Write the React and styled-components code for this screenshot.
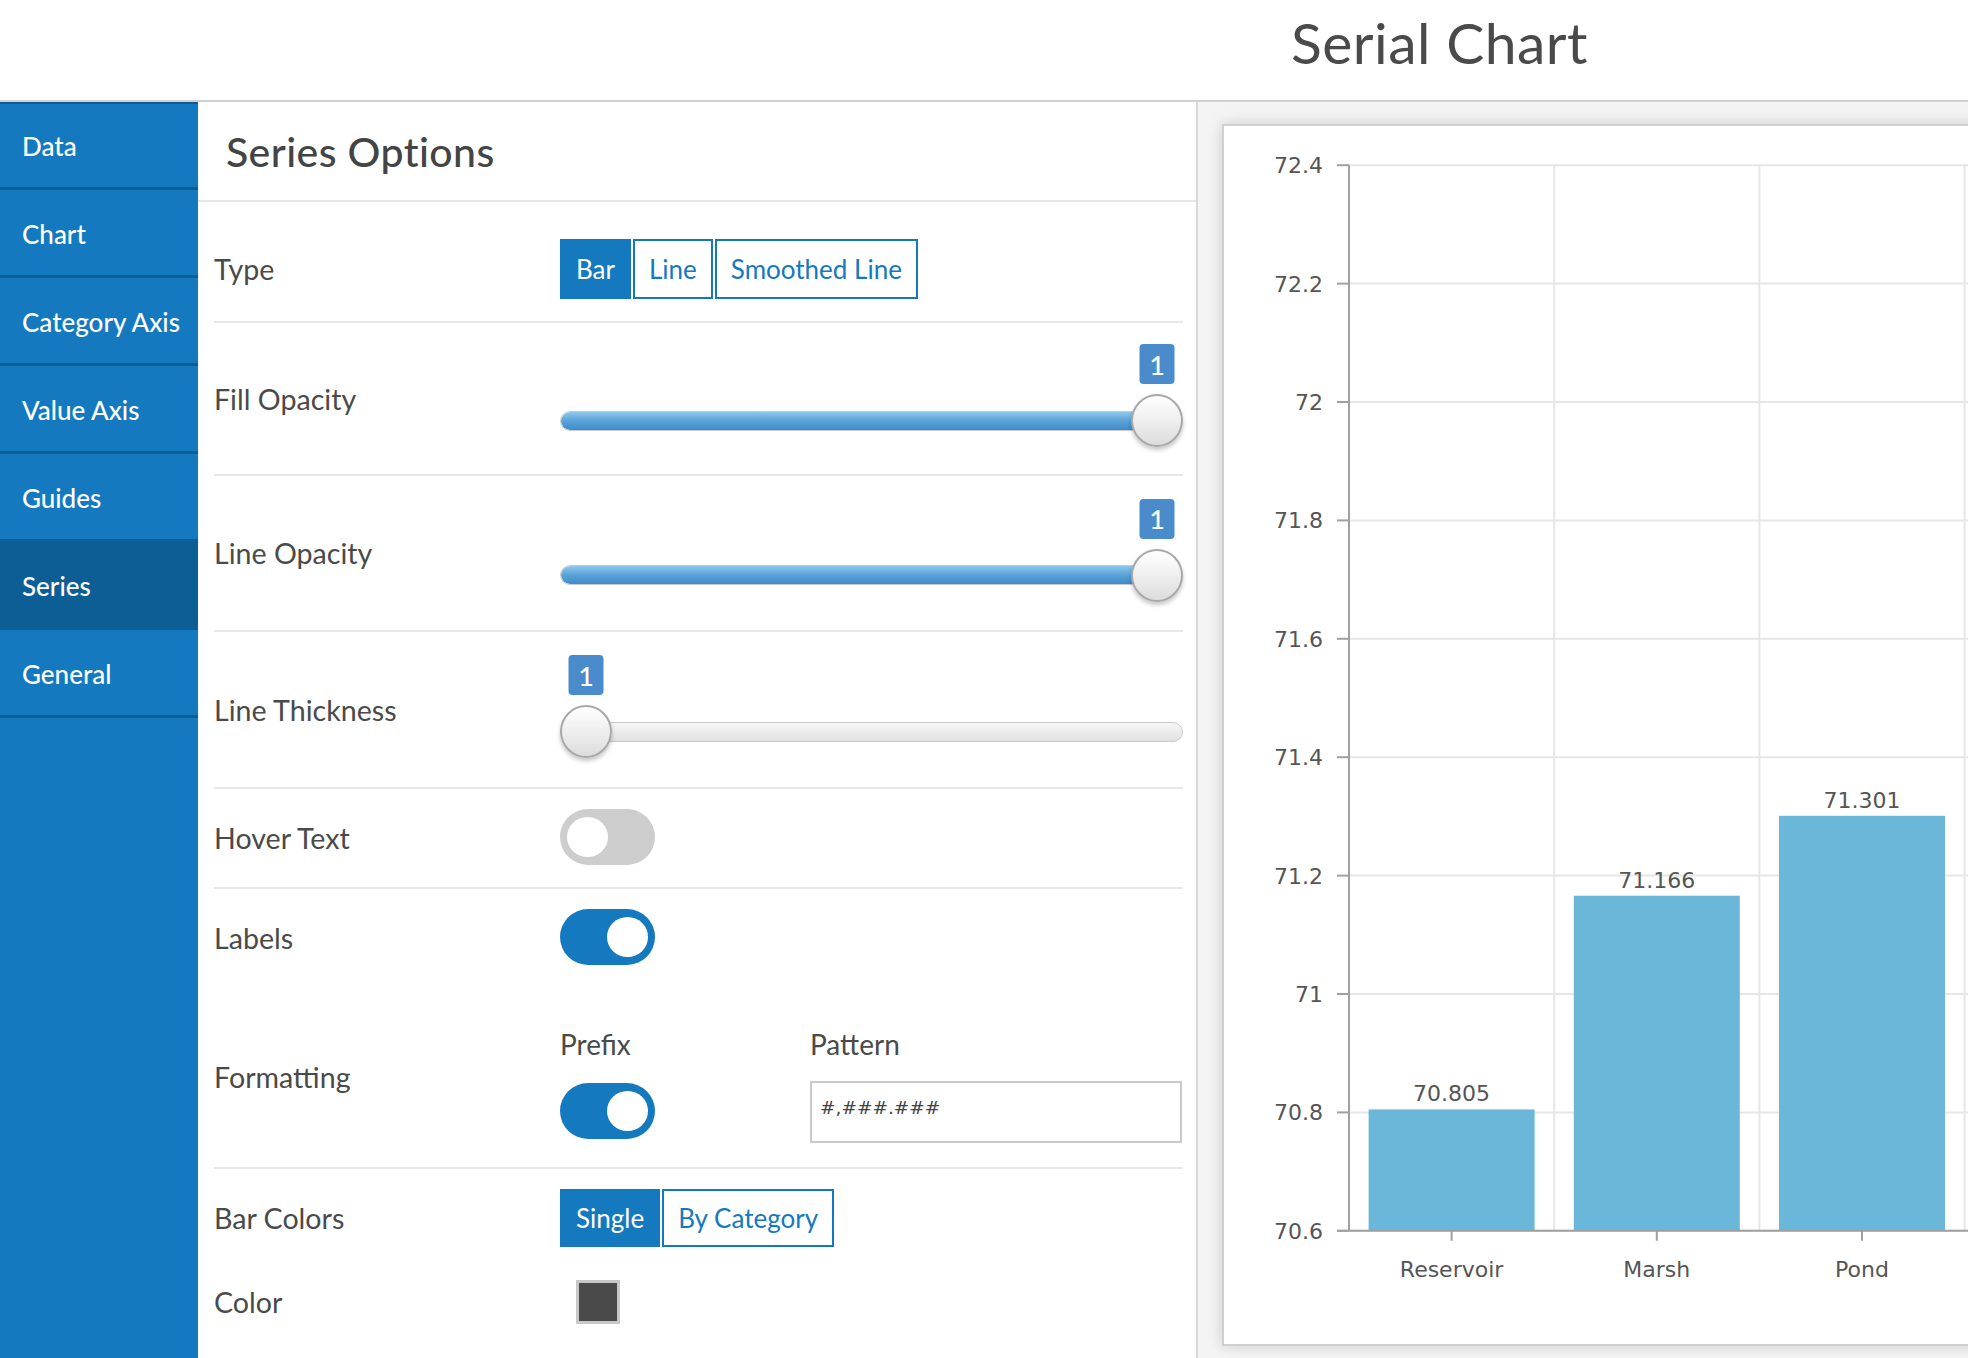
import React from "react";
import styled, { createGlobalStyle } from "styled-components";

const GlobalStyle = createGlobalStyle`
  html, body { margin: 0; padding: 0; background: #fff; }
  body { font-family: Lato, "Open Sans", sans-serif; color: #4a4a4a; }
  * { box-sizing: border-box; }
`;

const BLUE = "#1479bf";

const Page = styled.div`
  width: 1968px;
  height: 1358px;
  overflow: hidden;
  display: flex;
  flex-direction: column;
`;

const Header = styled.header`
  flex: none;
  height: 102px;
  border-bottom: 2px solid #d2d2d2;
  padding: 8px 0 0 1291px;
`;

const Title = styled.h1`
  margin: 0;
  font-size: 57px;
  font-weight: 400;
  line-height: 1.2;
  letter-spacing: 0.5px;
  color: #4a4a4a;
`;

const Body = styled.div`
  flex: 1;
  display: flex;
  min-height: 0;
`;

const Sidebar = styled.nav`
  flex: none;
  width: 198px;
  background: ${BLUE};
  box-shadow: inset 0 2px 0 #0d5e96;
`;

const NavItem = styled.div`
  height: 88px;
  display: flex;
  align-items: center;
  padding: 2px 0 0 22px;
  color: #fff;
  font-size: 26px;
  font-weight: 500;
  background: ${(p) => (p.$active ? "#0e5e96" : "transparent")};
  border-bottom: 3px solid #0e5f98;
`;

const Panel = styled.main`
  flex: none;
  width: 1000px;
  border-right: 2px solid #d8d8d8;
  background: #fff;
`;

const PanelHead = styled.div`
  height: 100px;
  display: flex;
  align-items: center;
  padding-left: 28px;
  border-bottom: 2px solid #e6e6e6;
  h2 {
    margin: 0;
    font-size: 41px;
    font-weight: 500;
    letter-spacing: 0.4px;
    color: #444;
  }
`;

const Rows = styled.div`
  padding: 0 13px 0 16px;
`;

const Row = styled.div`
  height: ${(p) => p.$h}px;
  display: grid;
  grid-template-columns: 346px 1fr;
  align-items: center;
  padding-top: ${(p) => p.$pt || 0}px;
  border-bottom: ${(p) => (p.$line ? "2px solid #e8e8e8" : "none")};
`;

const Label = styled.div`
  font-size: 28.6px;
  color: #4a4a4a;
`;

const Segmented = styled.div`
  display: flex;
  gap: 2px;
`;

const SegButton = styled.button`
  height: ${(p) => p.$h || 60}px;
  padding: 0 14px;
  border: 2px solid ${BLUE};
  background: ${(p) => (p.$active ? BLUE : "#fff")};
  color: ${(p) => (p.$active ? "#fff" : BLUE)};
  font-family: Lato, sans-serif;
  font-size: 26px;
  cursor: pointer;
`;

const SliderWrap = styled.div`
  position: relative;
  padding-top: 50px;
  padding-bottom: 6px;
`;

const Badge = styled.span`
  position: absolute;
  top: 0;
  width: 35px;
  height: 40px;
  transform: translateX(-50%);
  background: #4a8bcb;
  border-radius: 4px;
  color: #fff;
  font-size: 27px;
  font-weight: 500;
  display: flex;
  align-items: center;
  justify-content: center;
`;

const TrackArea = styled.div`
  position: relative;
  height: 53px;
  display: flex;
  align-items: center;
`;

const Track = styled.div`
  width: 100%;
  height: 20px;
  border-radius: 10px;
  background: linear-gradient(#f6f6f6, #e1e1e1);
  border: 1px solid #cbcbcb;
  overflow: hidden;
`;

const Fill = styled.div`
  height: 100%;
  background: linear-gradient(#8cc8ec, #5aa2d8 50%, #3f8bca);
  border-radius: 10px;
`;

const Knob = styled.span`
  position: absolute;
  top: 0;
  width: 52px;
  height: 53px;
  border-radius: 50%;
  background: linear-gradient(#ffffff, #f2f2f2 40%, #dcdcdc);
  border: 2px solid #a8a8a8;
  box-shadow: 0 3px 4px rgba(0, 0, 0, 0.22);
`;

const Toggle = styled.span`
  position: relative;
  display: inline-block;
  width: 95px;
  height: 56px;
  border-radius: 28px;
  background: ${(p) => (p.$on ? BLUE : "#cdcdcd")};
  &::after {
    content: "";
    position: absolute;
    top: 8px;
    left: ${(p) => (p.$on ? "47px" : "7px")};
    width: 41px;
    height: 40px;
    border-radius: 50%;
    background: #fff;
  }
`;

const FieldGrid = styled.div`
  display: grid;
  grid-template-columns: 250px 372px;
  grid-template-rows: 32px 62px;
  row-gap: 21px;
  align-items: center;
  margin-top: 17px;
`;

const SubLabel = styled.div`
  font-size: 28px;
  line-height: 32px;
  color: #4a4a4a;
`;

const PatternInput = styled.input`
  width: 372px;
  height: 62px;
  border: 2px solid #cacaca;
  padding: 0 8px 10px;
  font-family: "DejaVu Sans", Verdana, sans-serif;
  font-size: 18.5px;
  color: #444;
  outline: none;
`;

const Swatch = styled.span`
  display: block;
  width: 44px;
  height: 44px;
  margin-left: 16px;
  border: 3px solid #c8c8c8;
  background: #4a4a4a;
`;

const ChartArea = styled.section`
  flex: 1;
  min-width: 0;
  background: #f4f4f4;
  padding: 22px 0 0 24px;
  overflow: hidden;
`;

const ChartCard = styled.div`
  width: 820px;
  height: 1222px;
  background: #fff;
  border: 2px solid #d0d0d0;
  box-shadow: 0 0 14px rgba(0, 0, 0, 0.16);
`;

const Slider = ({ value, min, max }) => {
  const pct = (value - min) / (max - min);
  const center = `calc(${pct} * (100% - 52px) + 26px)`;
  return (
    <SliderWrap>
      <Badge style={{ left: center }}>{value}</Badge>
      <TrackArea>
        <Track>{pct > 0 && <Fill style={{ width: center }} />}</Track>
        <Knob style={{ left: `calc(${pct} * (100% - 52px))` }} />
      </TrackArea>
    </SliderWrap>
  );
};

// chart geometry (card inner coordinates)
const AX = 125;
const Y0 = 1104.8;
const STEP = 118.4;
const COL = 205.2;
const W = 816;
const yOf = (v) => Y0 - ((v - 70.6) / 0.2) * STEP;
const ticks = ["72.4", "72.2", "72", "71.8", "71.6", "71.4", "71.2", "71", "70.8", "70.6"];
const data = [
  { name: "Reservoir", value: 70.805 },
  { name: "Marsh", value: 71.166 },
  { name: "Pond", value: 71.301 },
];

const BarChart = () => {
  const top = yOf(72.4);
  return (
    <svg width={W} height={1218} style={{ display: "block" }}>
      <g fontFamily="'DejaVu Sans', Verdana, sans-serif" fontSize="22" fill="#555">
        {ticks.map((t) => {
          const y = yOf(parseFloat(t));
          return (
            <g key={t}>
              <line x1={AX} x2={W} y1={y} y2={y} stroke="#e6e6e6" strokeWidth="2" />
              <line x1={AX - 12} x2={AX} y1={y} y2={y} stroke="#a0a0a0" strokeWidth="2" />
              <text x={AX - 26} y={y + 8} textAnchor="end">{t}</text>
            </g>
          );
        })}
        {[1, 2, 3].map((k) => (
          <line key={k} x1={AX + COL * k} x2={AX + COL * k} y1={top} y2={Y0} stroke="#e6e6e6" strokeWidth="2" />
        ))}
        {data.map((d, i) => {
          const cx = AX + COL * i + COL / 2;
          const by = yOf(d.value);
          return (
            <g key={d.name}>
              <rect x={cx - 83} y={by} width={166} height={Y0 - by} fill="#6ab7da" />
              <text x={cx} y={by - 8} textAnchor="middle">{d.value.toFixed(3)}</text>
              <line x1={cx} x2={cx} y1={Y0} y2={Y0 + 10} stroke="#a0a0a0" strokeWidth="2" />
              <text x={cx} y={1151} textAnchor="middle">{d.name}</text>
            </g>
          );
        })}
        <line x1={AX} x2={AX} y1={top} y2={Y0} stroke="#a0a0a0" strokeWidth="2" />
        <line x1={AX - 12} x2={W} y1={Y0} y2={Y0} stroke="#a0a0a0" strokeWidth="2" />
      </g>
    </svg>
  );
};

const navItems = ["Data", "Chart", "Category Axis", "Value Axis", "Guides", "Series", "General"];

export default function App() {
  return (
    <Page>
      <GlobalStyle />
      <Header>
        <Title>Serial Chart</Title>
      </Header>
      <Body>
        <Sidebar>
          {navItems.map((n) => (
            <NavItem key={n} $active={n === "Series"}>{n}</NavItem>
          ))}
        </Sidebar>
        <Panel>
          <PanelHead>
            <h2>Series Options</h2>
          </PanelHead>
          <Rows>
            <Row $h={121} $pt={14} $line>
              <Label>Type</Label>
              <Segmented>
                <SegButton $active>Bar</SegButton>
                <SegButton>Line</SegButton>
                <SegButton>Smoothed Line</SegButton>
              </Segmented>
            </Row>
            <Row $h={153} $line>
              <Label>Fill Opacity</Label>
              <Slider value={1} min={0} max={1} />
            </Row>
            <Row $h={156} $line>
              <Label>Line Opacity</Label>
              <Slider value={1} min={0} max={1} />
            </Row>
            <Row $h={157} $line>
              <Label>Line Thickness</Label>
              <Slider value={1} min={1} max={10} />
            </Row>
            <Row $h={100} $line>
              <Label>Hover Text</Label>
              <div><Toggle /></div>
            </Row>
            <Row $h={98}>
              <Label>Labels</Label>
              <div><Toggle $on /></div>
            </Row>
            <Row $h={182} $line>
              <Label>Formatting</Label>
              <FieldGrid>
                <SubLabel>Prefix</SubLabel>
                <SubLabel>Pattern</SubLabel>
                <div><Toggle $on /></div>
                <PatternInput readOnly value="#,###.###" />
              </FieldGrid>
            </Row>
            <Row $h={98}>
              <Label>Bar Colors</Label>
              <Segmented>
                <SegButton $active $h={58}>Single</SegButton>
                <SegButton $h={58}>By Category</SegButton>
              </Segmented>
            </Row>
            <Row $h={70}>
              <Label>Color</Label>
              <Swatch />
            </Row>
          </Rows>
        </Panel>
        <ChartArea>
          <ChartCard>
            <BarChart />
          </ChartCard>
        </ChartArea>
      </Body>
    </Page>
  );
}
